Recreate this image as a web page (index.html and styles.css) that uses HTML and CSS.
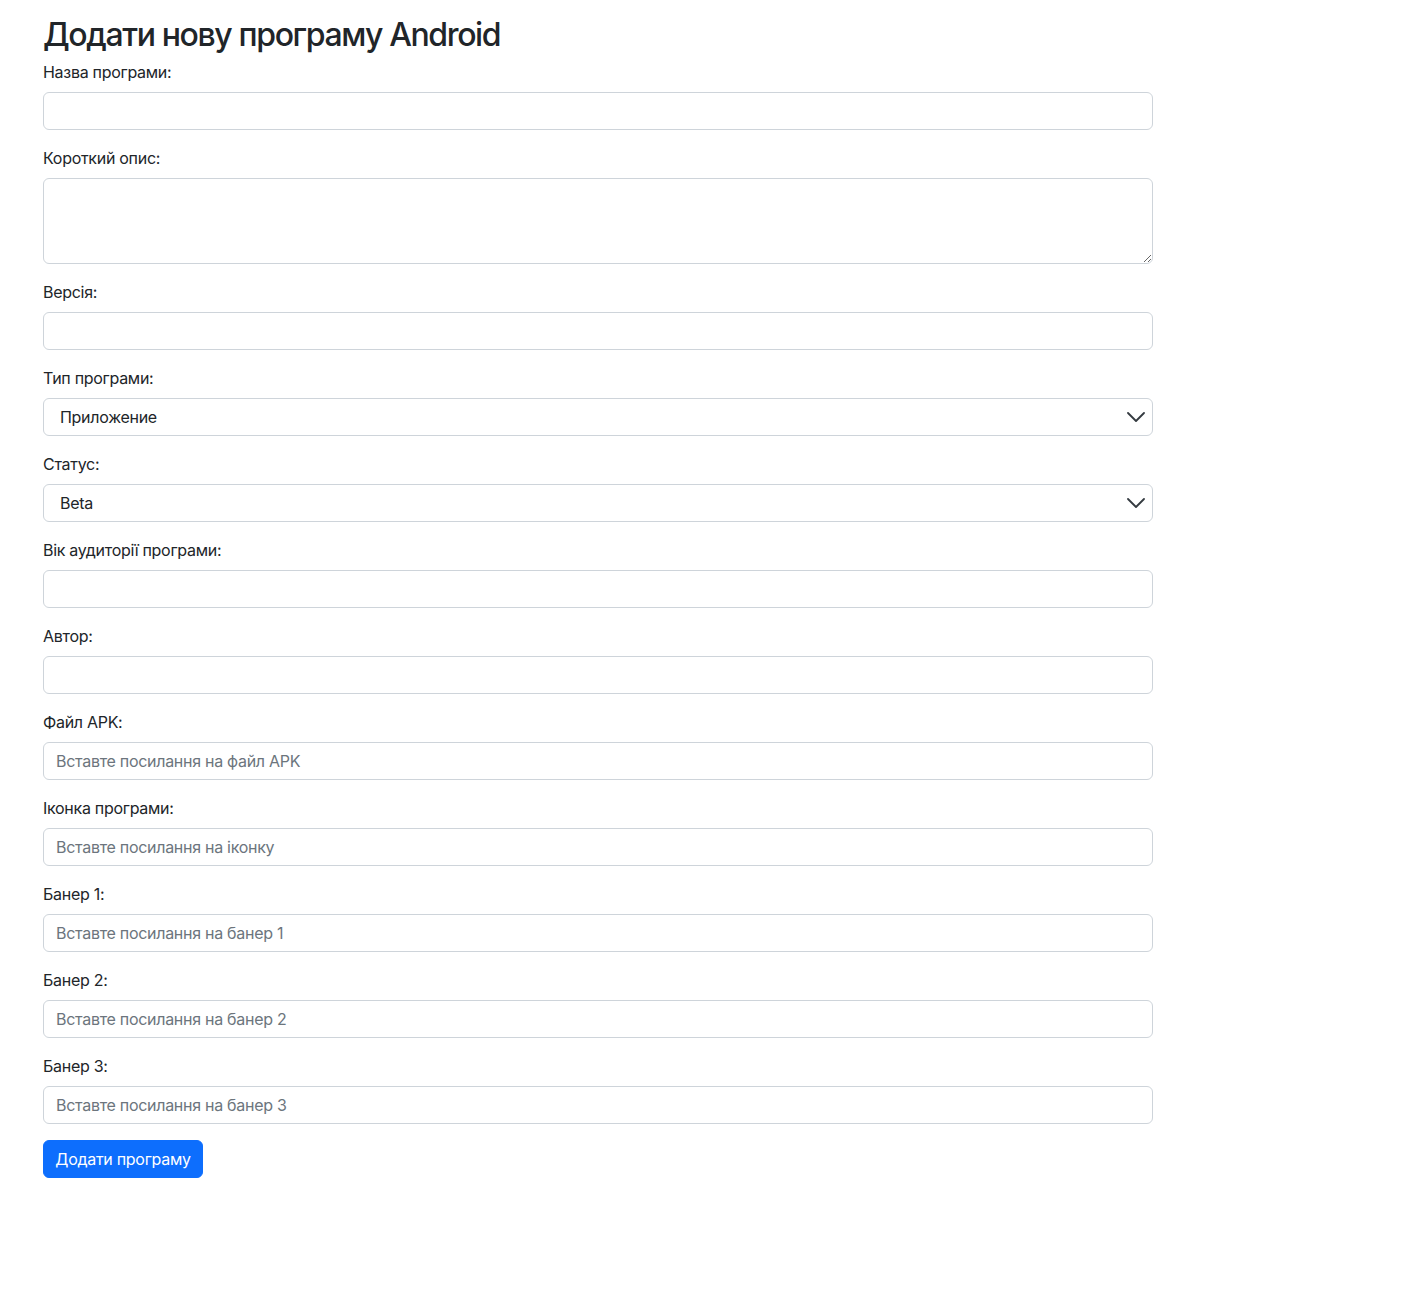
FILE: index.html
```html
<!DOCTYPE html>
<html lang="uk">
<head>
<meta charset="utf-8">
<title>Додати нову програму Android</title>
<link rel="stylesheet" href="styles.css">
</head>
<body>
<div class="container">
  <h2 class="title">Додати нову програму Android</h2>
  <form class="form">
    <div class="group">
      <label class="label">Назва програми:</label>
      <input class="control" type="text">
    </div>
    <div class="group">
      <label class="label">Короткий опис:</label>
      <textarea class="control area" rows="3"></textarea>
    </div>
    <div class="group">
      <label class="label">Версія:</label>
      <input class="control" type="text">
    </div>
    <div class="group">
      <label class="label">Тип програми:</label>
      <select class="control select"><option>Приложение</option></select>
    </div>
    <div class="group">
      <label class="label">Статус:</label>
      <select class="control select"><option>Beta</option></select>
    </div>
    <div class="group">
      <label class="label">Вік аудиторії програми:</label>
      <input class="control" type="text">
    </div>
    <div class="group">
      <label class="label">Автор:</label>
      <input class="control" type="text">
    </div>
    <div class="group">
      <label class="label">Файл APK:</label>
      <input class="control" type="text" placeholder="Вставте посилання на файл APK">
    </div>
    <div class="group">
      <label class="label">Іконка програми:</label>
      <input class="control" type="text" placeholder="Вставте посилання на іконку">
    </div>
    <div class="group">
      <label class="label">Банер 1:</label>
      <input class="control" type="text" placeholder="Вставте посилання на банер 1">
    </div>
    <div class="group">
      <label class="label">Банер 2:</label>
      <input class="control" type="text" placeholder="Вставте посилання на банер 2">
    </div>
    <div class="group">
      <label class="label">Банер 3:</label>
      <input class="control" type="text" placeholder="Вставте посилання на банер 3">
    </div>
    <button class="btn" type="button">Додати програму</button>
  </form>
</div>
</body>
</html>
```
FILE: styles.css
```css
* { box-sizing: border-box; }
html, body {
  margin: 0;
  padding: 0;
  background: #fff;
}
body {
  font-family: Inter, "Noto Sans", "Liberation Sans", sans-serif;
  font-size: 16px;
  line-height: 1.5;
  color: #212529;
  letter-spacing: -0.018em;
}
.container {
  width: 1110px;
  margin-left: 43px;
  padding-top: 16px;
}
.title {
  margin: 0 0 6px;
  font-size: 32px;
  font-weight: 500;
  line-height: 1.2;
  letter-spacing: -0.043em;
}
.form {
  display: flex;
  flex-direction: column;
}
.group {
  display: flex;
  flex-direction: column;
  margin-bottom: 16px;
}
.label {
  display: block;
  margin-bottom: 8px;
  font-size: 16px;
  line-height: 24px;
}
.control {
  display: block;
  width: 100%;
  height: 38px;
  padding: 6px 12px;
  font-family: inherit;
  font-size: 16px;
  line-height: 24px;
  letter-spacing: inherit;
  color: #212529;
  background: #fff;
  border: 1px solid #ced4da;
  border-radius: 6px;
  outline: none;
  appearance: none;
  -webkit-appearance: none;
}
.control::placeholder {
  color: #6c757d;
  opacity: 1;
}
.area {
  height: 86px;
  resize: vertical;
}
.select {
  padding-left: 16px;
  padding-right: 40px;
  background-image: url("data:image/svg+xml,%3Csvg xmlns='http://www.w3.org/2000/svg' viewBox='0 0 18 10'%3E%3Cpath d='M1 1l8 8 8-8' fill='none' stroke='%23343a40' stroke-width='1.8' stroke-linecap='round' stroke-linejoin='round'/%3E%3C/svg%3E");
  background-repeat: no-repeat;
  background-position: right 7px center;
  background-size: 18px 10px;
}
.btn {
  align-self: flex-start;
  width: 160px;
  height: 38px;
  padding: 6px 0;
  font-family: inherit;
  font-size: 16px;
  line-height: 24px;
  letter-spacing: inherit;
  white-space: nowrap;
  text-align: center;
  color: #fff;
  background: #0d6efd;
  border: 1px solid #0d6efd;
  border-radius: 6px;
}
```
